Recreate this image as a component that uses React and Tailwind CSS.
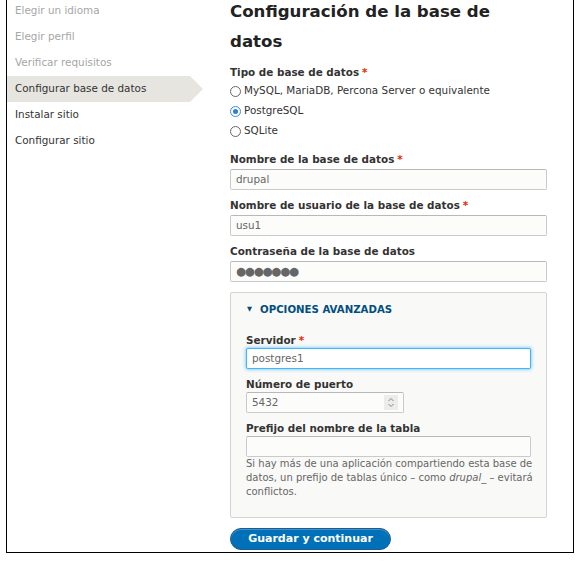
import { useState } from 'react';

const steps = [
  { name: 'Elegir un idioma', state: 'done' },
  { name: 'Elegir perfil', state: 'done' },
  { name: 'Verificar requisitos', state: 'done' },
  { name: 'Configurar base de datos', state: 'active' },
  { name: 'Instalar sitio', state: 'todo' },
  { name: 'Configurar sitio', state: 'todo' },
];

function Req() {
  return <span className="text-[#e62600] ml-[3px]">*</span>;
}

function Label({ children, className = '' }) {
  return (
    <div className={`text-[10.4px] font-bold text-[#333] leading-[14px] ${className}`}>
      {children}
    </div>
  );
}

function Radio({ label, checked }) {
  return (
    <label className="flex items-center h-[20px] text-[10.4px] text-[#333]">
      <span
        className={`w-[11px] h-[11px] rounded-full border mr-[3px] flex items-center justify-center ${checked ? 'border-[#3b8bd8]' : 'border-[#666]'}`}
      >
        {checked && <span className="w-[5px] h-[5px] rounded-full bg-[#2f7fd0]" />}
      </span>
      {label}
    </label>
  );
}

function Input({ value, className = '', focus = false, textClass = '' }) {
  return (
    <div
      className={`h-[21px] border rounded-[2px] px-[5px] flex items-center text-[10.4px] ${focus ? 'border-[#40b6ff] bg-white shadow-[0_0_3px_1px_rgba(64,182,255,0.55)]' : 'border-[#cacaca] border-t-[#b8b8b8] bg-[#fcfcfa]'} ${className}`}
    >
      <span className={`text-[#666] ${textClass}`}>{value}</span>
    </div>
  );
}

export default function App() {
  const [open] = useState(true);
  return (
    <div
      className="w-[582px] h-[564px] bg-white overflow-hidden"
      style={{ fontFamily: '"DejaVu Sans", "Liberation Sans", sans-serif' }}
    >
      <div className="ml-[6px] w-[568px] h-[553px] border-x border-b border-black flex">
        {/* pasos */}
        <aside className="w-[223px] -mt-[2px]">
          {steps.map((s) => (
            <div key={s.name} className="relative h-[26px] flex items-center">
              {s.state === 'active' && (
                <>
                  <div className="absolute left-0 top-0 h-[26px] w-[183px] bg-[#e7e5e0]" />
                  <div className="absolute left-[183px] top-0 w-0 h-0 border-y-[13px] border-y-transparent border-l-[13px] border-l-[#e7e5e0]" />
                </>
              )}
              <span
                className={`relative pl-[8px] text-[10.4px] ${s.state === 'done' ? 'text-[#a6a6a6]' : 'text-[#333]'}`}
              >
                {s.name}
              </span>
            </div>
          ))}
        </aside>

        {/* formulario */}
        <main className="w-[317px] -mt-[3px]">
          <h1 className="w-[290px] text-[16.6px] font-bold leading-[30px] text-[#222]">
            Configuración de la base de datos
          </h1>

          <Label className="mt-[8px]">
            Tipo de base de datos<Req />
          </Label>
          <div className="mt-[2px]">
            <Radio label="MySQL, MariaDB, Percona Server o equivalente" />
            <Radio label="PostgreSQL" checked />
            <Radio label="SQLite" />
          </div>

          <Label className="mt-[11px]">
            Nombre de la base de datos<Req />
          </Label>
          <Input value="drupal" className="mt-[3px]" />

          <Label className="mt-[8px]">
            Nombre de usuario de la base de datos<Req />
          </Label>
          <Input value="usu1" className="mt-[3px]" />

          <Label className="mt-[8px]">Contraseña de la base de datos</Label>
          <Input value="●●●●●●●" className="mt-[3px]" textClass="text-[#555] text-[11.5px] tracking-[-1.2px]" />

          {/* opciones avanzadas */}
          <div className="mt-[10px] border border-[#d4d4d0] rounded-[2px] bg-[#f9f9f7] px-[15px] pt-[10px] h-[226px]">
            <div className="flex items-center text-[10.2px] font-bold text-[#004f80] h-[14px]">
              <span className="text-[6.5px] ml-[1px] mr-[8px]">▼</span>
              {open && 'OPCIONES AVANZADAS'}
            </div>

            <Label className="mt-[16px]">
              Servidor<Req />
            </Label>
            <Input value="postgres1" focus className="mt-[1px]" />

            <Label className="mt-[8px]">Número de puerto</Label>
            <div className="mt-[1px] w-[158px] h-[21px] border border-[#cacaca] border-t-[#b8b8b8] rounded-[2px] bg-[#fcfcfa] pl-[5px] pr-[5px] flex items-center justify-between text-[10.4px]">
              <span className="text-[#666]">5432</span>
              <span className="w-[14px] h-[15px] bg-[#ececec] flex flex-col items-center justify-center">
                <svg width="8" height="11" viewBox="0 0 8 11">
                  <path d="M1.5 4 L4 1.5 L6.5 4" fill="none" stroke="#888" strokeWidth="1" />
                  <path d="M1.5 7 L4 9.5 L6.5 7" fill="none" stroke="#888" strokeWidth="1" />
                </svg>
              </span>
            </div>

            <Label className="mt-[8px]">Prefijo del nombre de la tabla</Label>
            <Input value="" className="mt-[1px]" />
            <p className="text-[10px] leading-[14px] text-[#666] whitespace-nowrap">
              Si hay más de una aplicación compartiendo esta base de
              <br />
              datos, un prefijo de tablas único – como <em>drupal_</em> – evitará
              <br />
              conflictos.
            </p>
          </div>

          <button className="mt-[10px] h-[22px] w-[161px] rounded-full bg-[#0071b8] border border-[#1e5c90] text-white text-[11px] font-bold flex items-center justify-center shadow-[inset_0_1px_0_rgba(255,255,255,0.25)]">
            Guardar y continuar
          </button>
        </main>
      </div>
    </div>
  );
}
